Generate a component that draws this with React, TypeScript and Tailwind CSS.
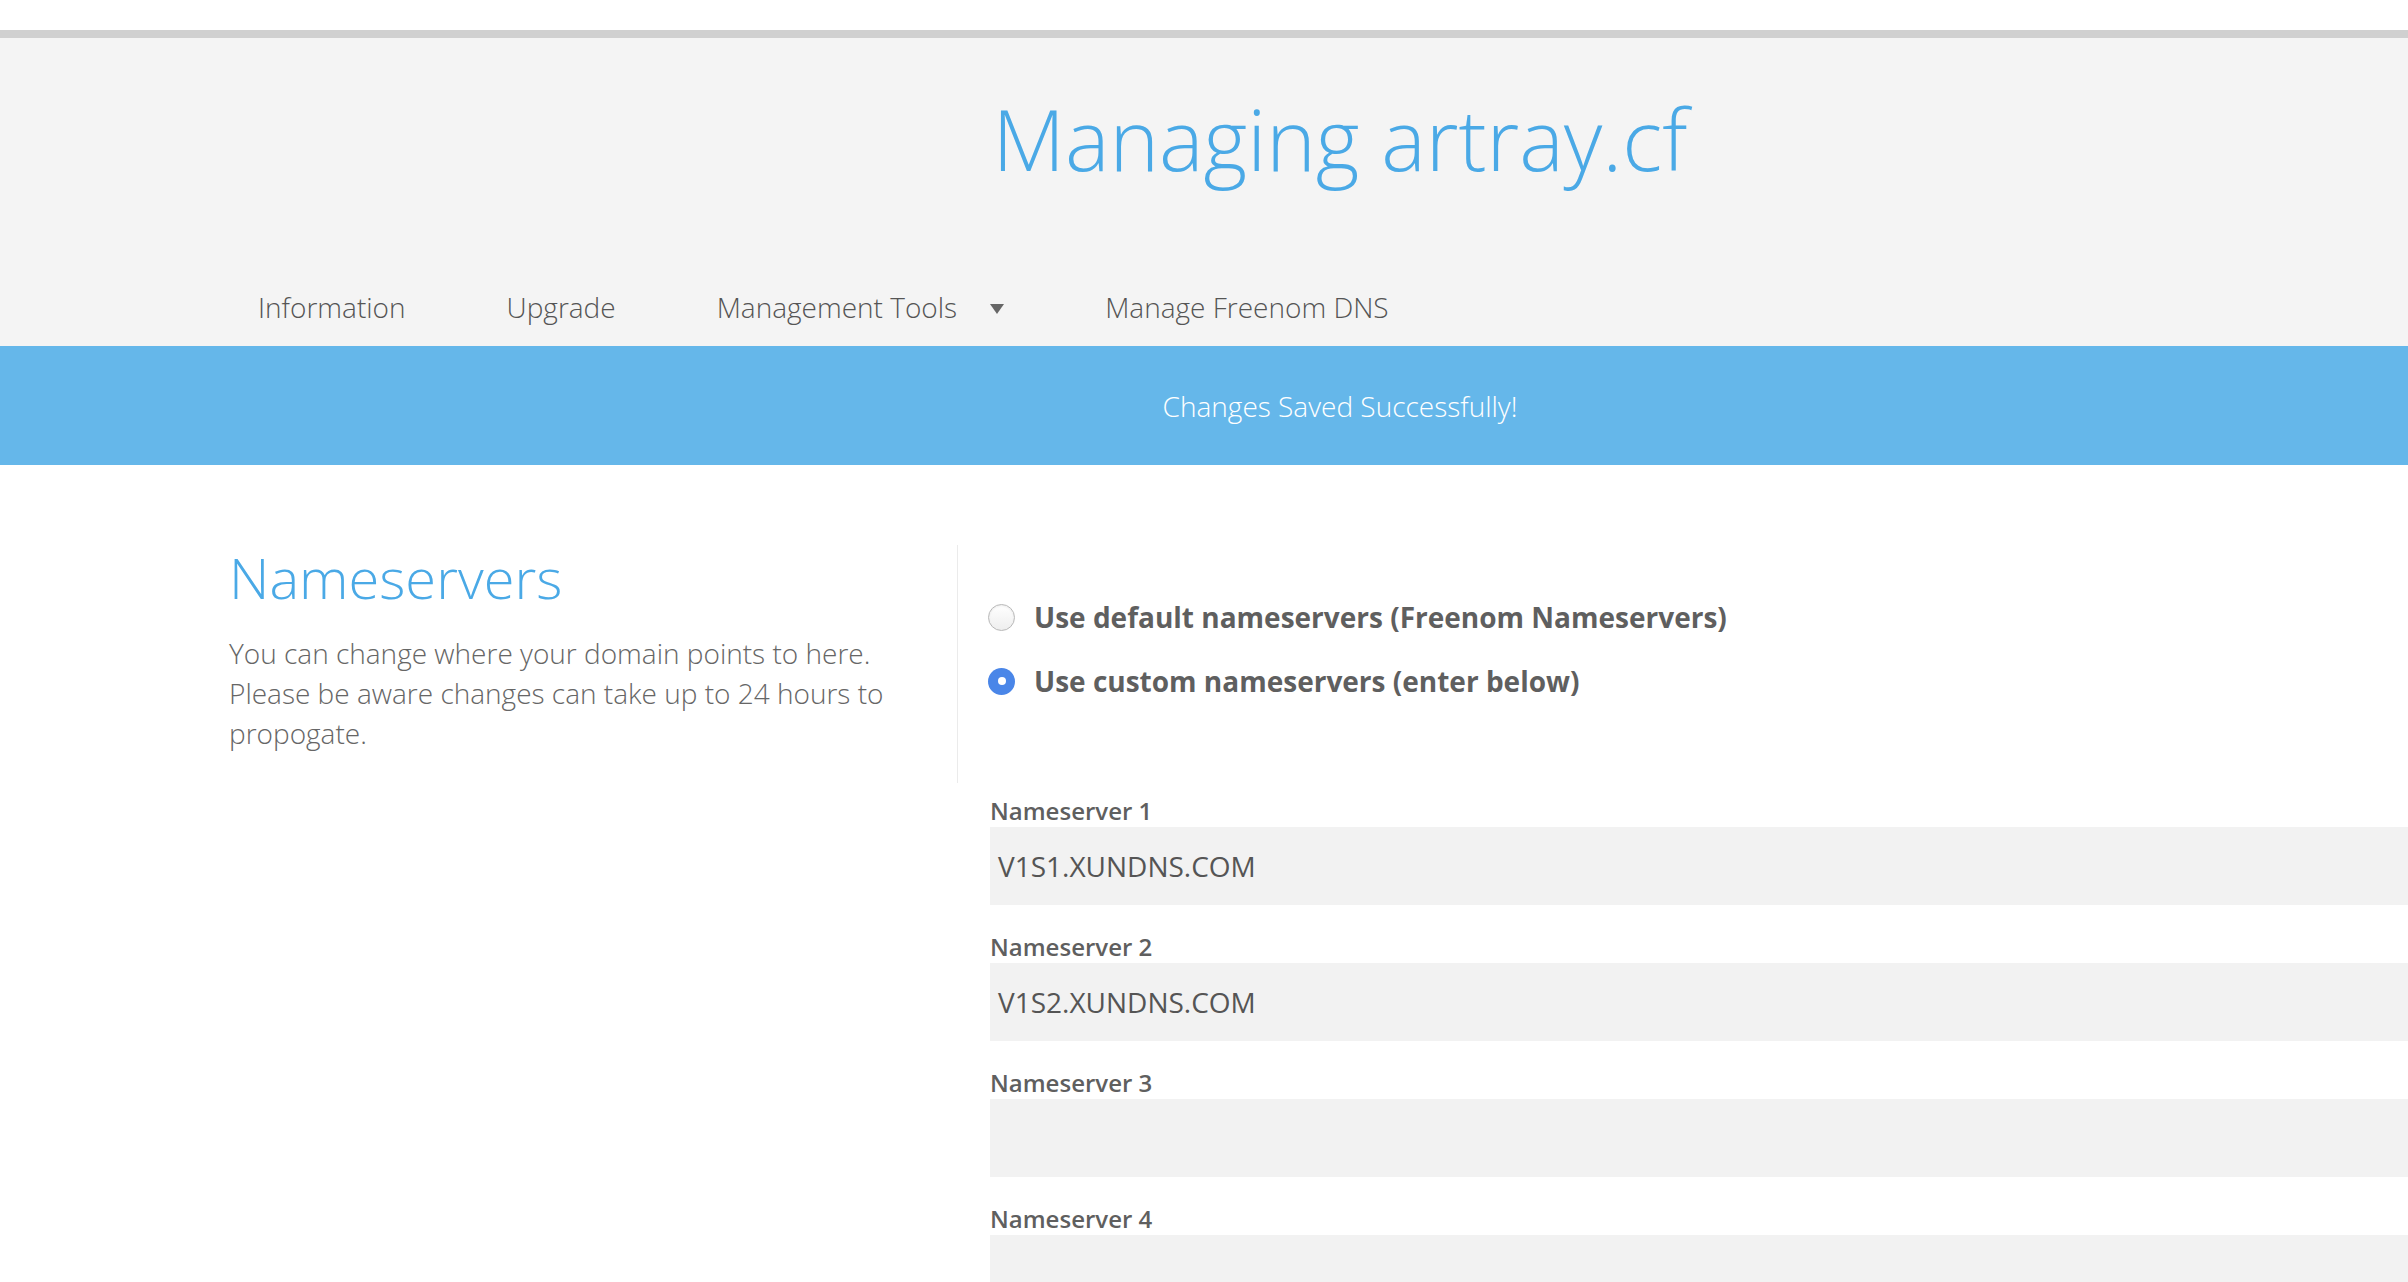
const FONT = "font-['Open_Sans','Liberation_Sans',sans-serif]";

function Radio({ checked }: { checked?: boolean }) {
  if (checked) {
    return (
      <span className="flex h-[27px] w-[27px] shrink-0 items-center justify-center rounded-full bg-[#4a86e8]">
        <span className="h-[8px] w-[8px] rounded-full bg-white" />
      </span>
    );
  }
  return (
    <span className="h-[27px] w-[27px] shrink-0 rounded-full border border-[#b8b8b8] bg-gradient-to-b from-white to-[#eeeeee] shadow-[inset_0_1px_2px_rgba(0,0,0,0.08)]" />
  );
}

function Field({ label, value }: { label: string; value?: string }) {
  return (
    <div className="mt-[25px] first:mt-0 pl-[2px]">
      <div className="text-[24px] font-semibold leading-[33px] text-[#5f5f5f]">{label}</div>
      <div className="flex h-[78px] w-full items-center bg-[#f2f2f2] pl-[8px] text-[28px] text-[#555]">
        {value}
      </div>
    </div>
  );
}

export default function App() {
  return (
    <div className={`h-[1282px] w-[2408px] overflow-hidden bg-white ${FONT}`}>
      <div className="h-[30px]" />
      <div className="h-[8px] bg-[#d0d0d0]" />

      {/* header */}
      <header className="h-[308px] w-[2680px] bg-[#f4f4f4] pt-[51px]">
        <h1 className="text-center text-[84px] font-light leading-[100px] text-[#4aa9e6]">
          Managing artray.cf
        </h1>
        <nav className="mt-[98px] flex items-center gap-[101px] pl-[258px] text-[28px] font-light leading-[40px] text-[#555]">
          <span>Information</span>
          <span>Upgrade</span>
          <span className="flex items-center gap-[33px]">
            Management Tools
            <svg width="14" height="10" viewBox="0 0 14 10" className="mt-[3px]">
              <path d="M0 0h14L7 10z" fill="#666" />
            </svg>
          </span>
          <span>Manage Freenom DNS</span>
        </nav>
      </header>

      {/* banner */}
      <div className="flex h-[119px] w-[2680px] items-center justify-center bg-[#65b7ea] text-[28px] font-light text-white">
        Changes Saved Successfully!
      </div>

      {/* content */}
      <main className="flex pt-[80px]">
        <section className="ml-[229px] h-[238px] w-[729px] shrink-0 border-r border-[#ebebeb]">
          <h2 className="text-[56px] font-light leading-[64px] text-[#4aa9e6]">Nameservers</h2>
          <p className="mt-[24px] text-[28px] font-light leading-[40px] text-[#666]">
            You can change where your domain points to here.
            <br />
            Please be aware changes can take up to 24 hours to
            <br />
            propogate.
          </p>
        </section>

        <section className="flex-1 pl-[30px]">
          <div className="mt-[51px] flex flex-col gap-[22px] text-[28px] font-bold leading-[42px] text-[#5f5f5f]">
            <label className="flex items-center gap-[19px]">
              <Radio />
              Use default nameservers (Freenom Nameservers)
            </label>
            <label className="flex items-center gap-[19px]">
              <Radio checked />
              Use custom nameservers (enter below)
            </label>
          </div>

          <div className="mt-[92px]">
            <Field label="Nameserver 1" value="V1S1.XUNDNS.COM" />
            <Field label="Nameserver 2" value="V1S2.XUNDNS.COM" />
            <Field label="Nameserver 3" />
            <Field label="Nameserver 4" />
          </div>
        </section>
      </main>
    </div>
  );
}
